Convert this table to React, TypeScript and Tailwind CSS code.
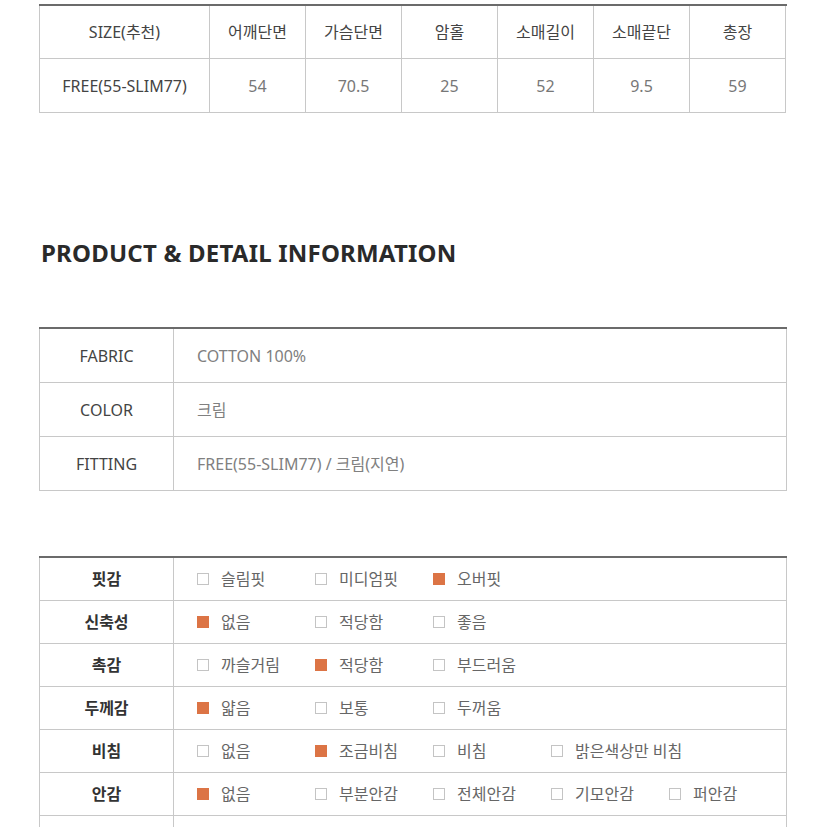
import React from 'react';

const FONT = '[font-family:"Noto_Sans","Noto_Sans_CJK_KR",sans-serif]';

const sizeHeaders = ['SIZE(추천)', '어깨단면', '가슴단면', '암홀', '소매길이', '소매끝단', '총장'];
const sizeValues = ['FREE(55-SLIM77)', '54', '70.5', '25', '52', '9.5', '59'];

const infoRows = [
  { label: 'FABRIC', value: 'COTTON 100%' },
  { label: 'COLOR', value: '크림' },
  { label: 'FITTING', value: 'FREE(55-SLIM77) / 크림(지연)' },
];

type Opt = { text: string; on?: boolean };

const detailRows: { label: string; options: Opt[] }[] = [
  { label: '핏감', options: [{ text: '슬림핏' }, { text: '미디엄핏' }, { text: '오버핏', on: true }] },
  { label: '신축성', options: [{ text: '없음', on: true }, { text: '적당함' }, { text: '좋음' }] },
  { label: '촉감', options: [{ text: '까슬거림' }, { text: '적당함', on: true }, { text: '부드러움' }] },
  { label: '두께감', options: [{ text: '얇음', on: true }, { text: '보통' }, { text: '두꺼움' }] },
  {
    label: '비침',
    options: [{ text: '없음' }, { text: '조금비침', on: true }, { text: '비침' }, { text: '밝은색상만 비침' }],
  },
  {
    label: '안감',
    options: [{ text: '없음', on: true }, { text: '부분안감' }, { text: '전체안감' }, { text: '기모안감' }, { text: '퍼안감' }],
  },
];

function Box({ on }: { on?: boolean }) {
  return on ? (
    <span className="block w-[12px] h-[12px] bg-[#dc7445] shrink-0" />
  ) : (
    <span className="block w-[12px] h-[12px] border border-[#c4c4c4] bg-white shrink-0" />
  );
}

export default function App() {
  return (
    <div className={`min-h-screen bg-white pl-[39px] pt-[4px] ${FONT}`}>
      <div className="w-[748px]">
        {/* size table */}
        <div className="border-t-2 border-[#6b6b6b]">
          <div className="grid grid-cols-[171px_repeat(6,96px)]">
            {sizeHeaders.map((h, i) => (
              <div
                key={h}
                className={`h-[53px] flex items-center justify-center border-b border-r border-[#c8c8c8] text-[16px] text-[#444] ${
                  i === 0 ? 'border-l' : ''
                }`}
              >
                {h}
              </div>
            ))}
            {sizeValues.map((v, i) => (
              <div
                key={i}
                className={`h-[54px] flex items-center justify-center border-b border-r border-[#c8c8c8] text-[16px] ${
                  i === 0 ? 'border-l text-[#444]' : 'text-[#777]'
                }`}
              >
                {v}
              </div>
            ))}
          </div>
        </div>

        <h2 className="mt-[125px] ml-[2px] text-[24px] leading-[30px] font-bold tracking-[0.2px] text-[#2a2a2a] [font-family:'Noto_Sans',sans-serif]">
          PRODUCT &amp; DETAIL INFORMATION
        </h2>

        {/* info table */}
        <div className="mt-[59px] border-t-2 border-[#6b6b6b]">
          {infoRows.map((r) => (
            <div key={r.label} className="flex h-[54px] border-b border-x border-[#c8c8c8]">
              <div className="w-[134px] shrink-0 border-r border-[#c8c8c8] flex items-center justify-center text-[16px] text-[#444]">
                {r.label}
              </div>
              <div className="flex-1 flex items-center pl-[23px] text-[16px] text-[#808080]">{r.value}</div>
            </div>
          ))}
        </div>

        {/* detail table */}
        <div className="mt-[65px] border-t-2 border-[#6b6b6b]">
          {detailRows.map((r) => (
            <div key={r.label} className="flex h-[43px] border-b border-x border-[#c8c8c8]">
              <div className="w-[134px] shrink-0 border-r border-[#c8c8c8] flex items-center justify-center text-[16px] font-semibold text-[#333]">
                {r.label}
              </div>
              <div className="flex-1 min-w-0 flex items-center pl-[23px]">
                {r.options.map((o, i) => (
                  <div key={i} className="w-[118px] shrink-0 flex items-center gap-[12px] text-[16px] text-[#666] whitespace-nowrap">
                    <Box on={o.on} />
                    <span>{o.text}</span>
                  </div>
                ))}
              </div>
            </div>
          ))}
          <div className="flex h-[43px] border-x border-[#c8c8c8]">
            <div className="w-[134px] shrink-0 border-r border-[#c8c8c8]" />
            <div className="flex-1" />
          </div>
        </div>
      </div>
    </div>
  );
}
